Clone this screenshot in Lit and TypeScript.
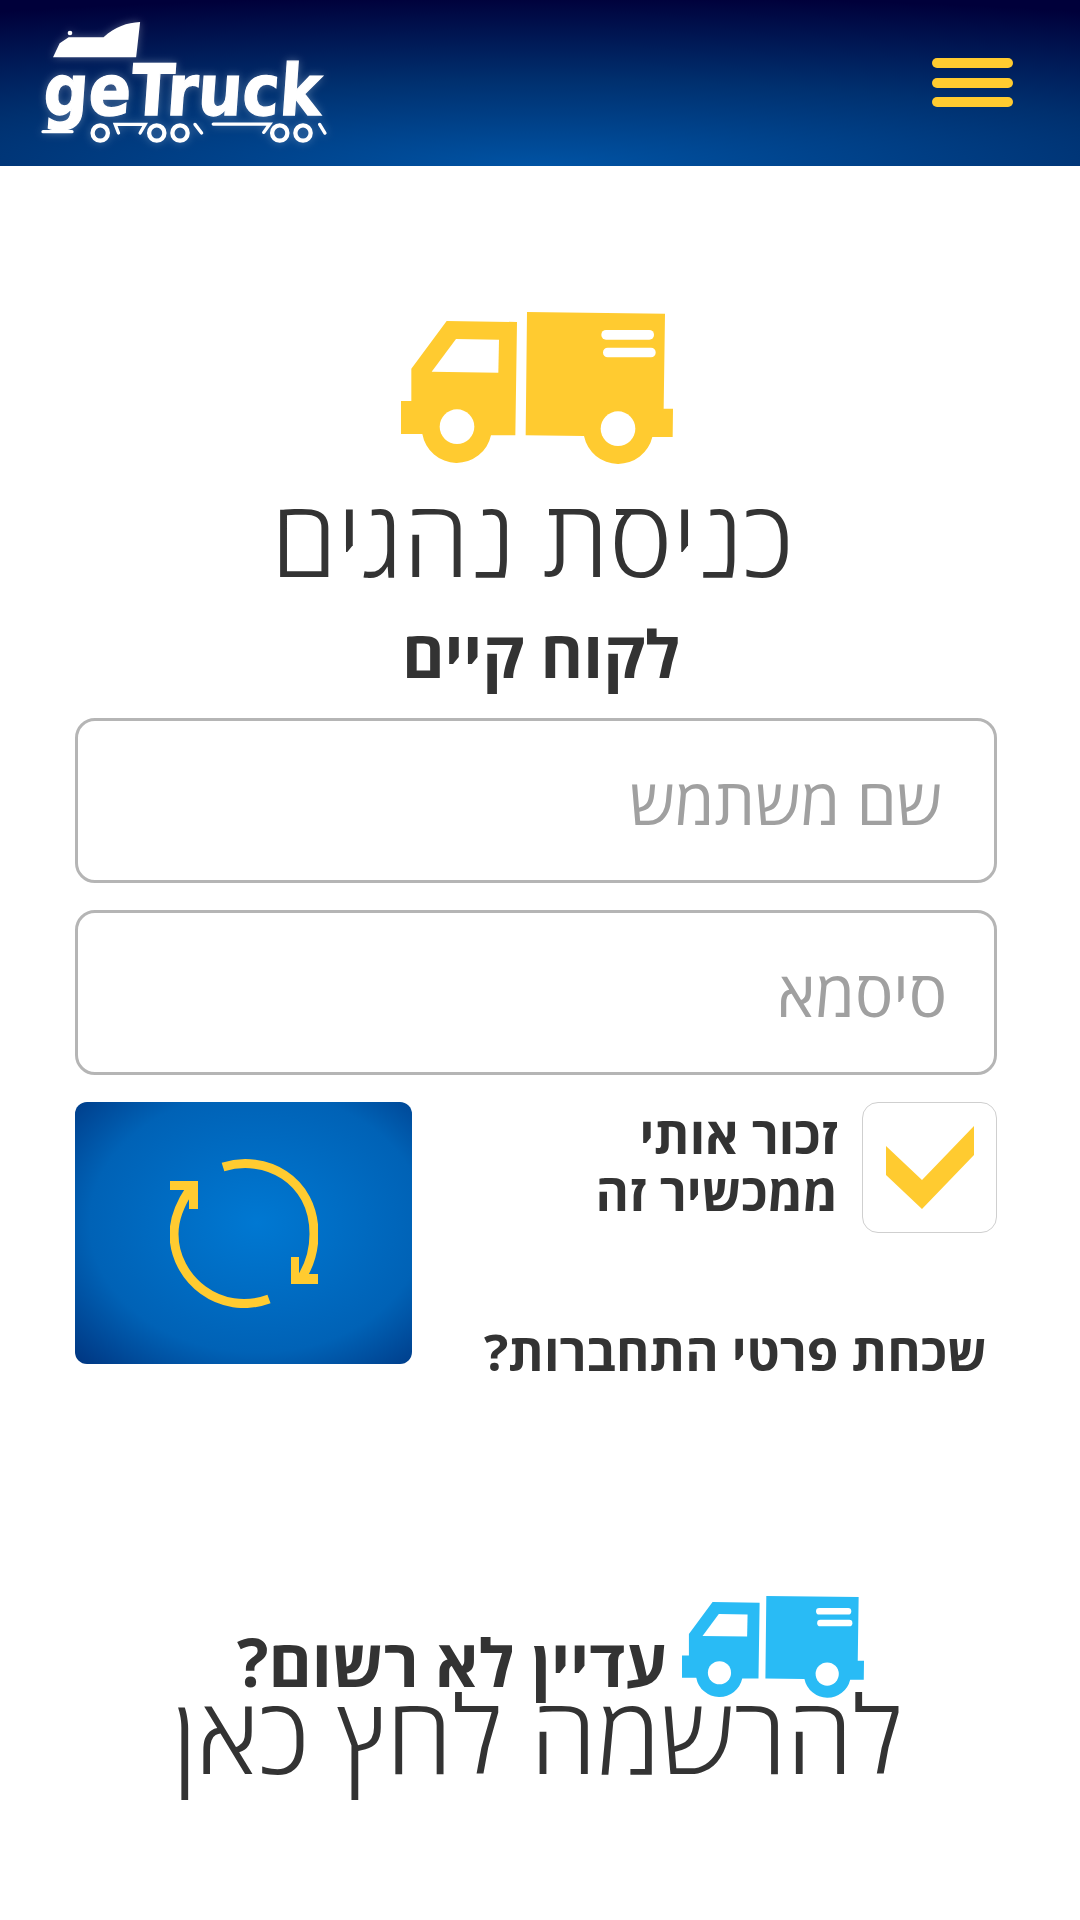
import {LitElement, html, css} from "lit"
import {customElement, property} from "lit/decorators.js"

@customElement("truck-icon")
class TruckIcon extends LitElement {
    @property({type: Number}) declare size: number

    static styles = css`
        :host { display: block; color: #ffcb30; line-height: 0; }
        .hole { fill: #fff; }
        .body { fill: currentColor; }
    `

    render() {
        return html`
            <svg viewBox="63 66 816 456" width="${this.size}" height="${this.size * 456 / 816}">
                <path class="body" d="M200 93L411 96L406 436L333 436A105 105 0 0 1 127 432L63 432L63 333L94 333L94 236Z"/>
                <path class="hole" d="M228 147L357 149L355 248L155 245Z"/>
                <circle class="hole" cx="231" cy="410" r="52"/>
                <path class="body" d="M441 66L855 71L851 356L879 356L878 441L817 441A105 105 0 0 1 612 438L437 436Z"/>
                <rect class="hole" x="664" y="120" width="158" height="29" rx="14"/>
                <rect class="hole" x="669" y="173" width="158" height="29" rx="14"/>
                <circle class="hole" cx="714" cy="416" r="52"/>
            </svg>
        `
    }
}

@customElement("app-root")
export class AppRoot extends LitElement {
    static styles = css`
        :host {
            display: block;
            width: 1080px;
            height: 1920px;
            background: #fff;
            font-family: "Open Sans", "Noto Sans", "DejaVu Sans", sans-serif;
            color: #333;
        }
        header {
            height: 166px;
            display: flex;
            justify-content: space-between;
            align-items: flex-start;
            padding: 0 67px 0 40px;
            background: radial-gradient(ellipse 1300px 170px at 50% 100%, #0053a4 0%, #00306f 50%, #00003a 100%);
        }
        .logo { display: block; margin-top: 20px; overflow: visible; filter: drop-shadow(0 0 4px rgba(255,255,255,.3)); }
        .logo-word {
            font-family: "DejaVu Sans", sans-serif;
            font-weight: 700;
            font-size: 213px;
            fill: #fff;
            stroke: #fff;
            stroke-width: 4px;
        }
        .burger { display: flex; flex-direction: column; gap: 9.5px; margin-top: 58px; }
        .burger span { display: block; width: 81px; height: 10px; border-radius: 5px; background: #ffcb30; }
        main {
            direction: rtl;
            display: flex;
            flex-direction: column;
            padding: 146px 83px 0 75px;
        }
        .hero { display: flex; flex-direction: column; align-items: center; }
        .hero truck-icon { margin-right: -2px; }
        h1 {
            margin: -1px 7px 0 0;
            font-size: 107px;
            font-weight: 300;
            line-height: 146px;
        }
        h2 {
            margin: 0 0 21px 10px;
            font-size: 65px;
            font-weight: 700;
            line-height: 88px;
        }
        .field {
            display: block;
            box-sizing: border-box;
            width: 100%;
            height: 165px;
            margin-bottom: 27px;
            padding: 0 52px;
            border: 3px solid #b5b5b5;
            border-radius: 20px;
            background: #fff;
            font: 400 64px "Open Sans", "Noto Sans", sans-serif;
            color: #333;
            direction: rtl;
            outline: none;
        }
        .field.pw { padding-right: 47px; }
        .field::placeholder { color: #a0a0a0; opacity: 1; }
        .row {
            display: flex;
            justify-content: space-between;
            align-items: flex-start;
        }
        .side { width: 510px; }
        .remember { display: flex; gap: 24px; }
        .check {
            box-sizing: border-box;
            flex: none;
            width: 135px;
            height: 131px;
            display: flex;
            align-items: center;
            justify-content: center;
            border: 1px solid #cfcfcf;
            border-radius: 16px;
        }
        .remember-text {
            font-size: 51px;
            font-weight: 700;
            line-height: 57px;
            padding-top: 4px;
        }
        .forgot {
            margin: 88px 10px 0 0;
            font-size: 51px;
            font-weight: 700;
            line-height: 60px;
            white-space: nowrap;
        }
        .go {
            width: 337px;
            height: 262px;
            display: flex;
            align-items: center;
            justify-content: center;
            border-radius: 12px;
            background: radial-gradient(ellipse at 54% 46%, #0078d2 0%, #0062b6 65%, #003580 100%);
        }
        .cta { display: flex; flex-direction: column; align-items: center; margin-top: 211px; }
        .cta-top { display: flex; align-items: flex-end; gap: 15px; height: 106px; margin-right: -29px; }
        .cta-top truck-icon { color: #29bbf5; }
        .cta-top span {
            font-size: 66px;
            font-weight: 700;
            line-height: 66px;
            margin-bottom: 4px;
        }
        .cta-link {
            margin-top: -4px;
            margin-right: -3px;
            font-size: 107px;
            font-weight: 300;
            line-height: 78px;
        }
    `

    render() {
        return html`
            <header>
                <svg class="logo" viewBox="120 60 870 370" width="290" height="123">
                    <path fill="#fff" d="M158 172L178 130L205 112L310 112C345 80 380 68 420 66L408 172Z"/>
                    <circle cx="209" cy="99" r="7" fill="#fff"/>
                    <text class="logo-word" x="150" y="345" transform="skewX(-4)" textLength="835" lengthAdjust="spacingAndGlyphs">geTruck</text>
                    <g fill="none" stroke="#fff" stroke-width="13">
                        <circle cx="300" cy="400" r="23"/>
                        <circle cx="470" cy="400" r="23"/>
                        <circle cx="540" cy="400" r="23"/>
                        <circle cx="840" cy="400" r="23"/>
                        <circle cx="910" cy="400" r="23"/>
                    </g>
                    <g fill="none" stroke="#fff" stroke-width="10" stroke-linecap="round">
                        <path d="M128 396L215 396"/>
                        <path d="M355 400L345 374L435 374L420 400"/>
                        <path d="M585 374L605 400"/>
                        <path d="M640 373L810 373L792 398"/>
                        <path d="M960 374L976 400"/>
                    </g>
                </svg>
                <div class="burger"><span></span><span></span><span></span></div>
            </header>
            <main>
                <div class="hero">
                    <truck-icon .size=${272}></truck-icon>
                    <h1>כניסת נהגים</h1>
                    <h2>לקוח קיים</h2>
                </div>
                <input class="field" placeholder="שם משתמש">
                <input class="field pw" placeholder="סיסמא">
                <div class="row">
                    <div class="side">
                        <div class="remember">
                            <div class="check">
                                <svg viewBox="0 0 88 83" width="88" height="83">
                                    <path fill="#ffcb30" d="M0 20L36 54L88 0L88 29L36 83L0 49Z"/>
                                </svg>
                            </div>
                            <div class="remember-text">זכור אותי<br>ממכשיר זה</div>
                        </div>
                        <div class="forgot">שכחת פרטי התחברות?</div>
                    </div>
                    <div class="go">
                        <svg viewBox="0 0 148 149" width="148" height="149">
                            <g fill="none" stroke="#ffcb30" stroke-width="9">
                                <path d="M53 8C95 -5 144 20 144 75C144 90 140 105 132 118"/>
                                <path d="M99 140C50 158 4 120 4 75C4 60 10 45 20 30"/>
                            </g>
                            <path fill="#ffcb30" d="M121 98L129 98L129 115L148 115L148 125L121 125Z"/>
                            <path fill="#ffcb30" d="M0 22L28 22L28 50L19 50L19 31L0 31Z"/>
                        </svg>
                    </div>
                </div>
                <div class="cta">
                    <div class="cta-top">
                        <truck-icon .size=${182}></truck-icon>
                        <span>עדיין לא רשום?</span>
                    </div>
                    <div class="cta-link">להרשמה לחץ כאן</div>
                </div>
            </main>
        `
    }
}
